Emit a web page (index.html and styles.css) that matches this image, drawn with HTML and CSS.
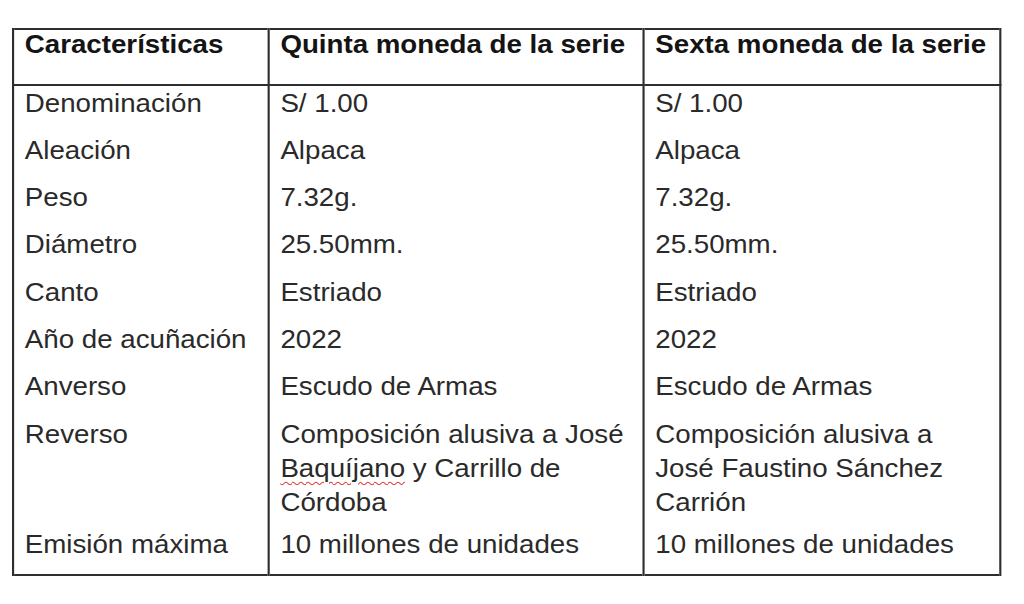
FILE: index.html
```html
<!DOCTYPE html>
<html lang="es">
<head>
<meta charset="utf-8">
<title>Características de monedas</title>
<link rel="stylesheet" href="styles.css">
</head>
<body>
<div class="sheet">
  <table class="coins">
    <colgroup>
      <col class="c1">
      <col class="c2">
      <col class="c3">
    </colgroup>
    <thead>
      <tr>
        <th>Características</th>
        <th>Quinta moneda de la serie</th>
        <th>Sexta moneda de la serie</th>
      </tr>
    </thead>
    <tbody>
      <tr><td>Denominación</td><td>S/ 1.00</td><td>S/ 1.00</td></tr>
      <tr><td>Aleación</td><td>Alpaca</td><td>Alpaca</td></tr>
      <tr><td>Peso</td><td>7.32g.</td><td>7.32g.</td></tr>
      <tr><td>Diámetro</td><td>25.50mm.</td><td>25.50mm.</td></tr>
      <tr><td>Canto</td><td>Estriado</td><td>Estriado</td></tr>
      <tr><td>Año de acuñación</td><td>2022</td><td>2022</td></tr>
      <tr><td>Anverso</td><td>Escudo de Armas</td><td>Escudo de Armas</td></tr>
      <tr class="multi">
        <td>Reverso</td>
        <td>Composición alusiva a José<br><span class="spell">Baquíjano</span> y Carrillo de<br>Córdoba</td>
        <td>Composición alusiva a<br>José Faustino Sánchez<br>Carrión</td>
      </tr>
      <tr><td>Emisión máxima</td><td>10 millones de unidades</td><td>10 millones de unidades</td></tr>
    </tbody>
  </table>
</div>
</body>
</html>
```

FILE: styles.css
```css
html, body {
  margin: 0;
  padding: 0;
  background: #ffffff;
}

.sheet {
  padding: 28px 0 0 12px;
}

.coins {
  border-collapse: collapse;
  table-layout: fixed;
  width: 927px;
  transform: scaleX(1.065);
  transform-origin: 0 0;
  font-family: "Liberation Sans", Arial, sans-serif;
  font-size: 26px;
  color: #2a2a2a;
  border: 2px solid #2e2e2e;
}

.c1 { width: 240px; }
.c2 { width: 352px; }
.c3 { width: 335px; }

.coins th,
.coins td {
  text-align: left;
  vertical-align: top;
  white-space: nowrap;
  padding: 0 6px 13.3px 10px;
  line-height: 34px;
  border-left: 2px solid #2e2e2e;
  border-right: 2px solid #2e2e2e;
}

.coins th {
  font-weight: bold;
  color: #141414;
  line-height: 28px;
  padding-bottom: 25.5px;
  border-bottom: 2px solid #2e2e2e;
}

.coins tr.multi td {
  padding-bottom: 8px;
}

.spell {
  text-decoration: underline wavy #e0413a;
  text-decoration-thickness: 1px;
  text-underline-offset: 4px;
}
```
